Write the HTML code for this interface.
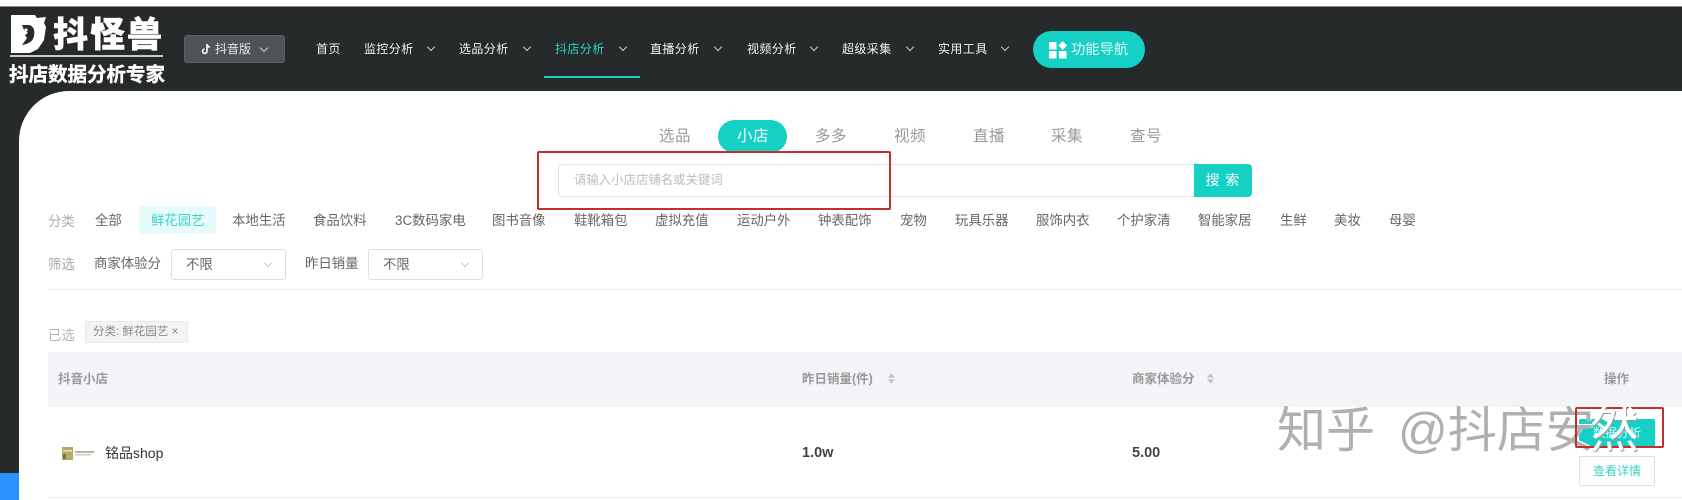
<!DOCTYPE html>
<html lang="zh">
<head>
<meta charset="utf-8">
<title>抖怪兽</title>
<style>
html,body{margin:0;padding:0;background:#fff}
body{width:1682px;height:500px;overflow:hidden;position:relative;font-family:"Liberation Sans","Noto Sans CJK SC",sans-serif;color:#555}
.a{position:absolute;white-space:nowrap}
.nav{font-size:12px;color:#f2f2f2;top:40px;line-height:18px;letter-spacing:.4px}
.chev{position:absolute;width:5px;height:5px;border-right:1px solid #c8c8c8;border-bottom:1px solid #c8c8c8;transform:rotate(45deg)}
.tab{font-size:15.5px;color:#999;top:127px;line-height:20px;letter-spacing:.5px}
.cat{font-size:13.4px;color:#666;top:212px;line-height:18px}
.lab{font-size:13.4px;color:#aaa;line-height:18px}
.sel{position:absolute;top:249px;height:29px;border:1px solid #dcdfe6;border-radius:3px;background:#fff}
.th{font-size:12.5px;color:#999;font-weight:bold;top:370px;line-height:18px}
.sort{position:absolute;width:7px;height:11px}
</style>
</head>
<body>
<!-- top bar -->
<div class="a" style="left:0;top:6px;width:1682px;height:85px;background:#272a2a;border-top:1px solid #888;box-sizing:border-box"></div>
<!-- sidebar + body -->
<div class="a" style="left:0;top:91px;width:19px;height:409px;background:#272a2a"></div>
<div class="a" style="left:0;top:91px;width:70px;height:70px;background:#272a2a"></div>
<div class="a" style="left:19px;top:91px;width:1663px;height:409px;background:#fff;border-top-left-radius:50px"></div>
<div class="a" style="left:0;top:473px;width:19px;height:27px;background:#2a92ff"></div>

<!-- logo -->
<svg class="a" style="left:10px;top:14px" width="36" height="40" viewBox="0 0 36 40">
<path fill="#fff" d="M1 1H25L27 4L36 3L34 9L36 13L34 26L28 35L20 39L1 39Z"/>
<path fill="#272a2a" d="M12 11H19C24 12 25 17 24 22C23 27 19 30 12 31L17 24L15 21L18 19L14 16Z"/>
<circle cx="16" cy="16" r="1.6" fill="#fff"/>
</svg>
<div class="a" style="left:53px;top:13px;font-size:35px;line-height:40px;font-weight:900;color:#fff;letter-spacing:2px;-webkit-text-stroke:.5px #fff;font-family:'Noto Sans CJK SC',sans-serif">抖怪兽</div>
<div class="a" style="left:10px;top:55px;width:153px;height:2px;background:#c9c9c9"></div>
<div class="a" style="left:9px;top:62px;font-size:19.5px;line-height:26px;font-weight:bold;color:#fff;-webkit-text-stroke:.4px #fff">抖店数据分析专家</div>

<!-- version -->
<div class="a" style="left:184px;top:35px;width:101px;height:28px;background:#50545a;border:1px solid #5c5f63;border-radius:3px;box-sizing:border-box"></div>
<svg class="a" style="left:201px;top:43px" width="10" height="12" viewBox="0 0 10 12"><path d="M6 1V8.2A2.2 2.2 0 1 1 3.6 6M6 1C6.4 3 7.6 4 9 4.2" fill="none" stroke="#fff" stroke-width="1.6"/></svg>
<div class="a" style="left:215px;top:40px;font-size:12px;line-height:18px;color:#e6e6e6">抖音版</div>
<div class="chev" style="left:261px;top:45px;border-color:#d0d0d0"></div>

<!-- nav -->
<div class="a nav" style="left:316px">首页</div>
<div class="a nav" style="left:364px">监控分析</div><div class="chev" style="left:428px;top:44px"></div>
<div class="a nav" style="left:459px">选品分析</div><div class="chev" style="left:524px;top:44px"></div>
<div class="a nav" style="left:555px;color:#2ad2c9">抖店分析</div><div class="chev" style="left:620px;top:44px"></div>
<div class="a nav" style="left:650px">直播分析</div><div class="chev" style="left:715px;top:44px"></div>
<div class="a nav" style="left:747px">视频分析</div><div class="chev" style="left:811px;top:44px"></div>
<div class="a nav" style="left:842px">超级采集</div><div class="chev" style="left:907px;top:44px"></div>
<div class="a nav" style="left:938px">实用工具</div><div class="chev" style="left:1002px;top:44px"></div>
<div class="a" style="left:544px;top:76px;width:96px;height:2px;background:#1fcfc4"></div>

<div class="a" style="left:1033px;top:31px;width:112px;height:37px;background:#14d0c5;border-radius:19px"></div>
<svg class="a" style="left:1049px;top:41px" width="18" height="18" viewBox="0 0 18 18" fill="#fff">
<rect x="0" y="1" width="7.5" height="7.5"/><rect x="0" y="10" width="7.5" height="7.5"/><rect x="10" y="10" width="7.5" height="7.5"/><path d="M13.7 0L18 4.5L13.7 9L9.5 4.5Z"/></svg>
<div class="a" style="left:1071px;top:40px;font-size:14.3px;line-height:20px;color:#e9fbfa">功能导航</div>

<!-- tabs -->
<div class="a tab" style="left:659px">选品</div>
<div class="a" style="left:718px;top:120px;width:69px;height:33px;background:#14d0c5;border-radius:17px"></div>
<div class="a tab" style="left:737px;color:#fff">小店</div>
<div class="a tab" style="left:815px">多多</div>
<div class="a tab" style="left:894px">视频</div>
<div class="a tab" style="left:973px">直播</div>
<div class="a tab" style="left:1051px">采集</div>
<div class="a tab" style="left:1130px">查号</div>

<!-- search -->
<div class="a" style="left:558px;top:164px;width:637px;height:33px;border:1px solid #dfe2e6;border-right:0;border-radius:4px 0 0 4px;box-sizing:border-box"></div>
<div class="a" style="left:574px;top:171px;font-size:12.4px;line-height:18px;color:#bbb">请输入小店店铺名或关键词</div>
<div class="a" style="left:1194px;top:164px;width:58px;height:33px;background:#14d0c5;border-radius:0 4px 4px 0;color:#fff;font-size:14px;line-height:33px;text-align:center;letter-spacing:1px">搜 索</div>
<div class="a" style="left:537px;top:151px;width:354px;height:59px;border:2.5px solid #c2302e;box-sizing:border-box;border-radius:2px"></div>

<!-- categories -->
<div class="a lab" style="left:48px;top:213px">分类</div>
<div class="a cat" style="left:95px">全部</div>
<div class="a" style="left:139px;top:206px;width:77px;height:28px;background:#e7fbfa;border-radius:3px"></div>
<div class="a cat" style="left:151px;color:#3fd3ca">鲜花园艺</div>
<div class="a cat" style="left:232px">本地生活</div>
<div class="a cat" style="left:313px">食品饮料</div>
<div class="a cat" style="left:395px">3C数码家电</div>
<div class="a cat" style="left:492px">图书音像</div>
<div class="a cat" style="left:574px">鞋靴箱包</div>
<div class="a cat" style="left:655px">虚拟充值</div>
<div class="a cat" style="left:737px">运动户外</div>
<div class="a cat" style="left:818px">钟表配饰</div>
<div class="a cat" style="left:900px">宠物</div>
<div class="a cat" style="left:955px">玩具乐器</div>
<div class="a cat" style="left:1036px">服饰内衣</div>
<div class="a cat" style="left:1117px">个护家清</div>
<div class="a cat" style="left:1198px">智能家居</div>
<div class="a cat" style="left:1280px">生鲜</div>
<div class="a cat" style="left:1334px">美妆</div>
<div class="a cat" style="left:1389px">母婴</div>

<!-- filters -->
<div class="a lab" style="left:48px;top:256px">筛选</div>
<div class="a cat" style="left:94px;top:255px">商家体验分</div>
<div class="sel" style="left:171px;width:113px"></div>
<div class="a cat" style="left:186px;top:256px">不限</div>
<div class="chev" style="left:265px;top:260px;border-color:#c8ccd2"></div>
<div class="a cat" style="left:305px;top:255px">昨日销量</div>
<div class="sel" style="left:368px;width:113px"></div>
<div class="a cat" style="left:383px;top:256px">不限</div>
<div class="chev" style="left:462px;top:260px;border-color:#c8ccd2"></div>
<div class="a" style="left:48px;top:289px;width:1634px;height:1px;background:#ebedf0"></div>

<!-- selected -->
<div class="a lab" style="left:48px;top:327px;color:#b5b5b5">已选</div>
<div class="a" style="left:85px;top:321px;width:103px;height:22px;background:#f2f3f5;border:1px solid #e8e9ec;border-radius:2px;box-sizing:border-box"></div>
<div class="a" style="left:93px;top:324px;font-size:11.5px;line-height:16px;color:#888">分类: 鲜花园艺 ×</div>

<!-- table -->
<div class="a" style="left:48px;top:352px;width:1634px;height:55px;background:#f3f4f8"></div>
<div class="a th" style="left:58px">抖音小店</div>
<div class="a th" style="left:802px">昨日销量(件)</div>
<svg class="sort" style="left:888px;top:373px" viewBox="0 0 8 12" fill="#bfc2c8"><path d="M4 0L8 5H0Z"/><path d="M4 12L8 7H0Z"/></svg>
<div class="a th" style="left:1132px">商家体验分</div>
<svg class="sort" style="left:1207px;top:373px" viewBox="0 0 8 12" fill="#bfc2c8"><path d="M4 0L8 5H0Z"/><path d="M4 12L8 7H0Z"/></svg>
<div class="a th" style="left:1604px;font-weight:bold">操作</div>

<div class="a" style="left:48px;top:497px;width:1634px;height:1px;background:#e9ebee"></div>
<svg class="a" style="left:61px;top:446px" width="34" height="15" viewBox="0 0 34 15">
<rect x="1" y="1" width="11" height="13" fill="#b7a868"/><rect x="2" y="4" width="9" height="1.5" fill="#e7e0b8"/><rect x="2" y="8" width="3" height="5" fill="#6d7a4e"/><rect x="14" y="5" width="19" height="2" fill="#b9b6a8"/><rect x="14" y="8" width="16" height="1.5" fill="#cfcdc2"/></svg>
<div class="a" style="left:105px;top:443px;font-size:14px;line-height:20px;color:#333">铭品shop</div>
<div class="a" style="left:802px;top:443px;font-size:14.5px;line-height:20px;color:#444;font-weight:bold">1.0w</div>
<div class="a" style="left:1132px;top:443px;font-size:14.5px;line-height:20px;color:#444;font-weight:bold">5.00</div>

<div class="a" style="left:1579px;top:419px;width:76px;height:28px;background:#14d0c5;border-radius:2px"></div>
<div class="a" style="left:1593px;top:425px;font-size:12px;line-height:16px;color:#dff">数据分析</div>
<div class="a" style="left:1579px;top:456px;width:76px;height:30px;border:1px solid #dcdfe6;border-radius:2px;box-sizing:border-box;background:#fff;color:#3fcfc6;font-size:12px;line-height:28px;text-align:center">查看详情</div>

<!-- watermark -->
<div class="a" style="left:1277px;top:399px;font-size:49px;line-height:64px;color:#b0b0b0;text-shadow:1px -1px 0 #fff">知乎</div>
<div class="a" style="left:1398px;top:399px;font-size:49px;line-height:64px;color:#b0b0b0;text-shadow:1px -1px 0 #fff">@抖店安</div>
<div class="a" style="left:1575px;top:407px;width:89px;height:41px;border:2.5px solid #c2302e;box-sizing:border-box;border-radius:2px"></div>
<div class="a" style="left:1590px;top:399px;font-size:49px;line-height:64px;color:#fff;text-shadow:1px 1px 0 #999">然</div>
</body>
</html>
